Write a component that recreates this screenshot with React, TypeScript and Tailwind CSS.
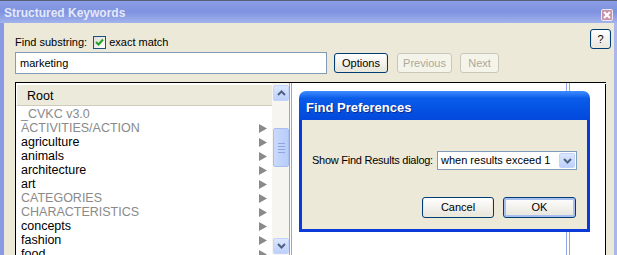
import React from 'react';

type Row = { label: string; dim?: boolean; arrow?: boolean };

const rows: Row[] = [
  { label: '_CVKC v3.0', dim: true },
  { label: 'ACTIVITIES/ACTION', dim: true, arrow: true },
  { label: 'agriculture', arrow: true },
  { label: 'animals', arrow: true },
  { label: 'architecture', arrow: true },
  { label: 'art', arrow: true },
  { label: 'CATEGORIES', dim: true, arrow: true },
  { label: 'CHARACTERISTICS', dim: true, arrow: true },
  { label: 'concepts', arrow: true },
  { label: 'fashion', arrow: true },
  { label: 'food', arrow: true },
];

function Arrow() {
  return (
    <svg width="8" height="9" viewBox="0 0 8 9">
      <path d="M0 0 L8 4.5 L0 9 Z" fill="#8a8a8a" />
    </svg>
  );
}

function Chevron({ up }: { up?: boolean }) {
  return (
    <svg width="9" height="6" viewBox="0 0 9 6">
      <path
        d={up ? 'M1 5 L4.5 1.5 L8 5' : 'M1 1 L4.5 4.5 L8 1'}
        fill="none"
        stroke="#4d6185"
        strokeWidth="2"
      />
    </svg>
  );
}

function XpButton({
  children,
  disabled,
  isDefault,
  className = '',
}: {
  children: React.ReactNode;
  disabled?: boolean;
  isDefault?: boolean;
  className?: string;
}) {
  if (disabled) {
    return (
      <div
        className={`flex items-center justify-center rounded-[3px] border border-[#c9c7ba] bg-[#f5f4ea] text-[#aca899] ${className}`}
      >
        {children}
      </div>
    );
  }
  return (
    <div
      className={`flex items-center justify-center rounded-[3px] border border-[#003c74] bg-gradient-to-b from-[#ffffff] to-[#e6e4da] text-black ${
        isDefault ? 'shadow-[inset_0_0_0_2px_#a8c0f0]' : 'shadow-[inset_0_-1px_0_1px_#ebe8dc]'
      } ${className}`}
    >
      {children}
    </div>
  );
}

export default function App() {
  return (
    <div className="relative w-[617px] h-[255px] overflow-hidden bg-[#ece9d8] font-['Liberation_Sans',Arial,sans-serif] text-[11px] text-black">
      {/* title bar */}
      <div className="flex h-[23px] items-center justify-between border-t border-[#5a5f78] bg-gradient-to-b from-[#8b9de5] via-[#7f92e0] to-[#a3b3ec] pl-[4px] pr-[4px]">
        <span className="pt-[1px] text-[12px] font-bold text-[#e3e9f9]">Structured Keywords</span>
        <div className="mt-[5px] flex h-[12px] w-[12px] items-center justify-center rounded-[2px] border border-[#f0e6ec] bg-[#c893ad]">
          <svg width="8" height="8" viewBox="0 0 8 8">
            <path d="M1 1 L7 7 M7 1 L1 7" stroke="#ffffff" strokeWidth="2" />
          </svg>
        </div>
      </div>

      {/* window body */}
      <div className="flex h-[232px] flex-col border-l-[4px] border-r-[3px] border-l-[#8a9be3] border-r-[#a9b7ea] pl-[11px] pr-[3px]">
        {/* find row */}
        <div className="mt-[6px] flex h-[20px] items-end justify-between">
          <div className="flex h-[14px] items-center">
            <span>Find substring:</span>
            <div className="ml-[6px] flex h-[13px] w-[13px] items-center justify-center border border-[#1c5180] bg-gradient-to-br from-[#dcdcd7] to-[#ffffff]">
              <svg width="9" height="9" viewBox="0 0 9 9">
                <path d="M1 4 L3.5 6.5 L8 1.5" fill="none" stroke="#21a121" strokeWidth="2" />
              </svg>
            </div>
            <span className="ml-[3px]">exact match</span>
          </div>
          <XpButton className="h-[20px] w-[21px]">?</XpButton>
        </div>

        {/* search row */}
        <div className="mt-[3px] flex h-[22px] items-center">
          <div className="flex h-[22px] w-[312px] items-center border border-[#7f9db9] bg-white pl-[4px]">marketing</div>
          <XpButton className="ml-[7px] h-[20px] w-[54px]">Options</XpButton>
          <XpButton disabled className="ml-[9px] h-[20px] w-[55px]">
            Previous
          </XpButton>
          <XpButton disabled className="ml-[8px] h-[20px] w-[39px]">
            Next
          </XpButton>
        </div>

        {/* panels */}
        <div className="mt-[8px] flex h-[173px] w-[591px] border-l border-t border-black bg-white">
          {/* tree */}
          <div className="flex w-[273px] bg-white">
            <div className="flex flex-1 flex-col">
              <div className="ml-[1px] mt-[1px] flex h-[22px] items-center border-b border-t border-b-[#cfcbbb] border-t-white bg-[#ebeadb] pl-[10px] pt-[3px] text-[12.5px]">
                Root
              </div>
              <div className="mt-[1px] flex flex-col text-[12.5px]">
                {rows.map((r) => (
                  <div key={r.label} className="flex h-[14px] shrink-0 items-center justify-between pl-[5px] pr-[5px]">
                    <span className={r.dim ? 'text-[#8a8a8a]' : 'text-black'}>{r.label}</span>
                    {r.arrow && <Arrow />}
                  </div>
                ))}
              </div>
            </div>
            {/* scrollbar */}
            <div className="flex w-[17px] flex-col items-start bg-[#f6f5f0] pt-[2px] pl-[1px]">
              <div className="flex h-[16px] w-[16px] items-center justify-center rounded-[2px] border border-[#c3d3fd] bg-gradient-to-b from-[#dde7fe] to-[#bcd0fb]">
                <Chevron up />
              </div>
              <div className="mt-[27px] flex h-[39px] w-[16px] flex-col items-center justify-center gap-[2px] rounded-[2px] border border-[#a9bff2] bg-gradient-to-r from-[#cad9fd] to-[#b8cdfa]">
                <div className="h-[1px] w-[7px] bg-[#8ea5e0]" />
                <div className="h-[1px] w-[7px] bg-[#8ea5e0]" />
                <div className="h-[1px] w-[7px] bg-[#8ea5e0]" />
                <div className="h-[1px] w-[7px] bg-[#8ea5e0]" />
              </div>
              <div className="mt-[71px] flex h-[16px] w-[16px] items-center justify-center rounded-[2px] border border-[#c3d3fd] bg-gradient-to-b from-[#dde7fe] to-[#bcd0fb]">
                <Chevron />
              </div>
            </div>
          </div>
          {/* right pane */}
          <div className="flex flex-1 bg-white">
            <div className="w-[1px] bg-[#8fa3e8]" />
            <div className="w-[1px] bg-white" />
            <div className="w-[1px] bg-[#8fa3e8]" />
            <div className="w-[274px]" />
            <div className="w-[1px] bg-[#8fa3e8]" />
            <div className="w-[2px] bg-white" />
            <div className="w-[1px] bg-[#8fa3e8]" />
            <div className="flex-1" />
            <div className="mt-[1px] w-[1px] bg-black" />
          </div>
        </div>
      </div>

      {/* Find Preferences dialog */}
      <div className="absolute left-[299px] top-[91px] flex h-[141px] w-[291px] flex-col">
        <div className="flex h-[29px] items-start rounded-t-[7px] bg-gradient-to-b from-[#3d8cff] via-[#0a5ce9] via-[25%] to-[#0248dc] pl-[7px] pt-[9px] text-[13px] leading-[15px] font-bold text-white [text-shadow:1px_1px_0_#0b2a8c]">
          Find Preferences
        </div>
        <div className="flex flex-1 flex-col border-x-[3px] border-b-[3px] border-[#0a3ad8] bg-[#ece9d8] pl-[10px] pr-[11px]">
          <div className="mt-[31px] flex h-[19px] items-center">
            <span className="w-[125px] shrink-0 whitespace-nowrap tracking-[-0.25px]">Show Find Results dialog:</span>
            <div className="flex h-[19px] w-[140px] shrink-0 items-center justify-between border border-[#7f9db9] bg-white pl-[3px] pr-[1px]">
              <span className="whitespace-nowrap">when results exceed 1</span>
              <div className="flex h-[15px] w-[16px] items-center justify-center rounded-[2px] border border-[#c3d3fd] bg-gradient-to-b from-[#dde7fe] to-[#bcd0fb]">
                <Chevron />
              </div>
            </div>
          </div>
          <div className="mt-[27px] flex justify-end gap-[9px]">
            <XpButton className="h-[21px] w-[72px]">Cancel</XpButton>
            <XpButton isDefault className="h-[21px] w-[73px]">
              OK
            </XpButton>
          </div>
        </div>
      </div>
    </div>
  );
}
